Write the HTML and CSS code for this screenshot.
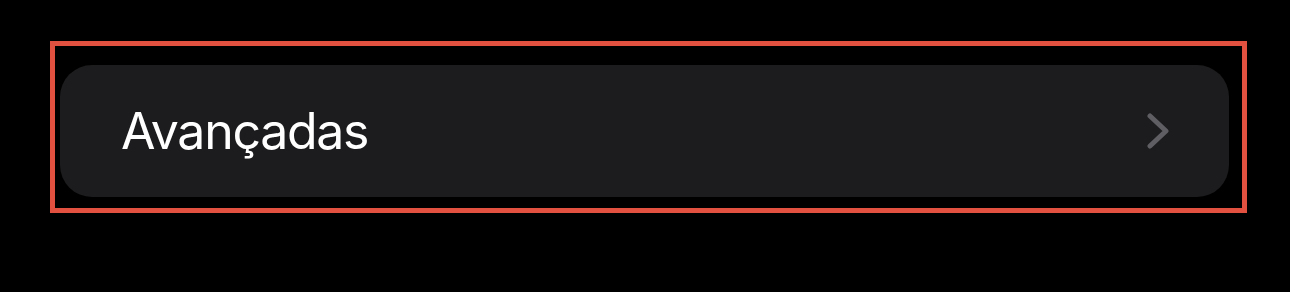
FILE: index.html
```html
<!DOCTYPE html>
<html lang="pt">
<head>
<meta charset="utf-8">
<link rel="stylesheet" href="styles.css">
</head>
<body>
<div class="page">
  <div class="highlight">
    <div class="row">
      <span class="label">Avançadas</span>
      <svg class="chevron" width="22" height="36" viewBox="0 0 22 36" aria-hidden="true">
        <path d="M3 3 L19 18 L3 33" fill="none" stroke="#5e5e63" stroke-width="5" stroke-linecap="round" stroke-linejoin="round"/>
      </svg>
    </div>
  </div>
</div>
</body>
</html>
```
FILE: styles.css
```css
html, body {
  margin: 0;
  padding: 0;
  background: #000;
}
.page {
  width: 1290px;
  height: 292px;
  padding: 41px 0 0 50px;
  box-sizing: border-box;
}
.highlight {
  width: 1197px;
  height: 172px;
  box-sizing: border-box;
  border: 5px solid #e2503f;
  padding: 19px 13px 11px 5px;
}
.row {
  height: 132px;
  background: #1c1c1e;
  border-radius: 32px;
  display: flex;
  align-items: center;
  justify-content: space-between;
  padding: 0 60px 0 61px;
  box-sizing: border-box;
}
.label {
  font-family: Inter, "Liberation Sans", sans-serif;
  font-size: 50px;
  color: #fff;
  letter-spacing: -1.3px;
  line-height: 1;
}
.chevron {
  display: block;
}
```
